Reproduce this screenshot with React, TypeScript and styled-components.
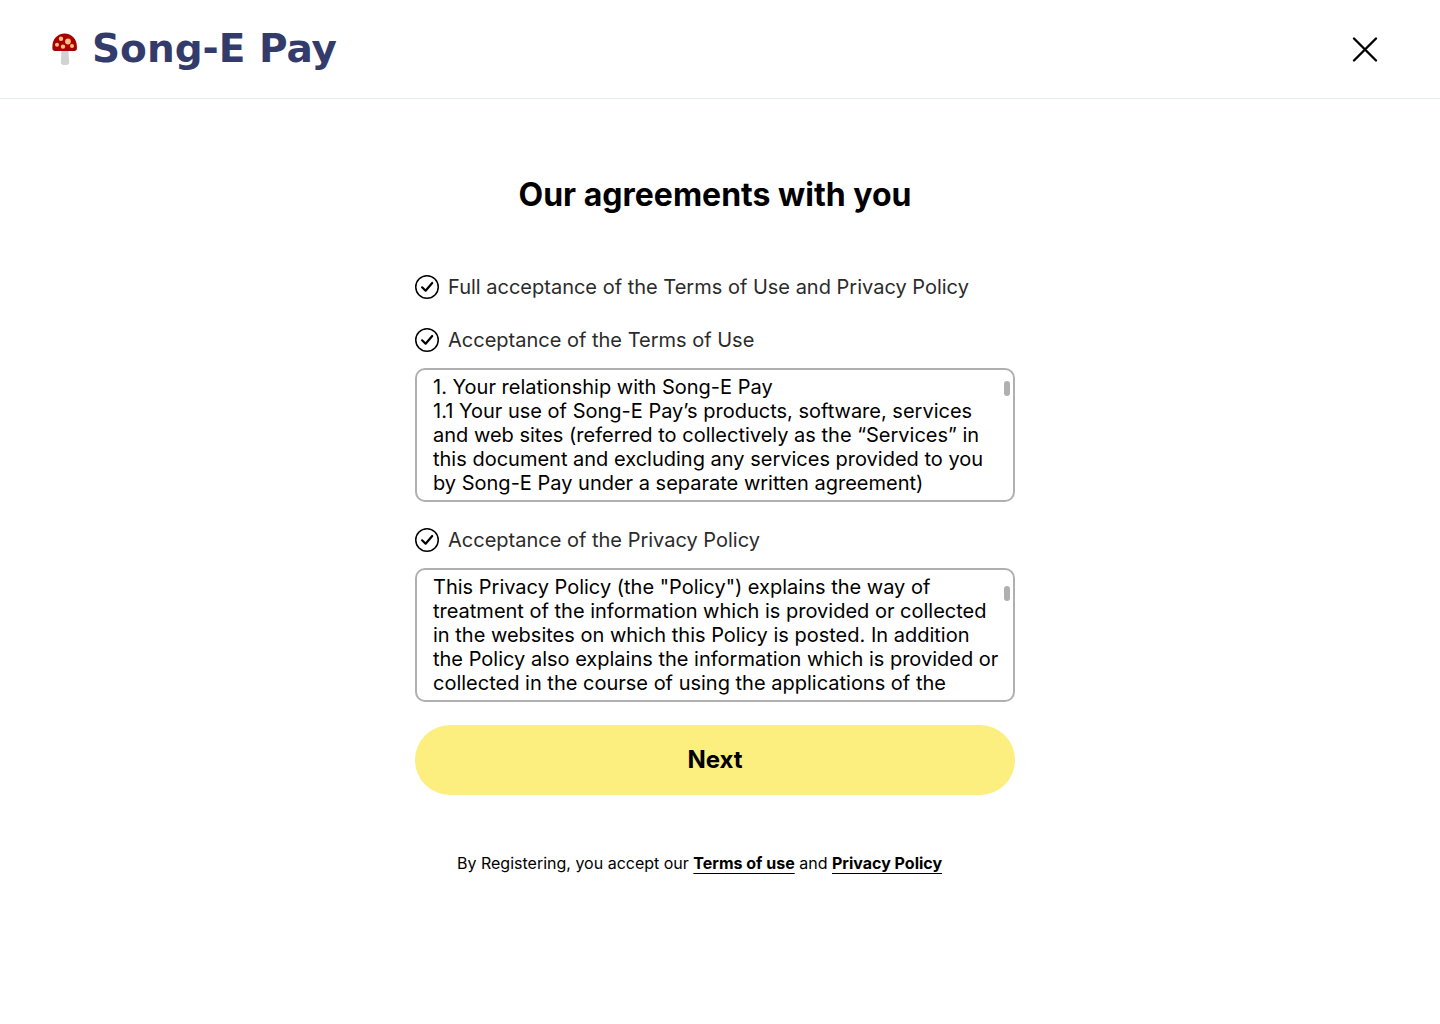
import React, { useId, useState } from "react";
import styled, { createGlobalStyle } from "styled-components";

const GlobalStyle = createGlobalStyle`
  *, *::before, *::after { box-sizing: border-box; }
  body {
    margin: 0;
    background: #ffffff;
    color: #000000;
    font-family: Inter, "Liberation Sans", sans-serif;
  }
`;

const Header = styled.header`
  display: flex;
  align-items: center;
  justify-content: space-between;
  height: 99px;
  padding: 0 60px 0 52px;
  border-bottom: 1px solid #e2ebf2;
`;

const Brand = styled.a`
  display: flex;
  align-items: center;
  gap: 14px;
  color: #333b6b;
  text-decoration: none;
`;

const BrandName = styled.span`
  font-family: "DejaVu Sans", sans-serif;
  font-size: 39px;
  font-weight: 700;
  line-height: 48px;
`;

const CloseButton = styled.button`
  display: flex;
  padding: 0;
  border: 0;
  background: none;
  color: inherit;
  cursor: pointer;
`;

const Main = styled.main`
  padding: 72px 10px 40px 0;
`;

const Column = styled.form`
  display: flex;
  flex-direction: column;
  width: 100%;
  max-width: 600px;
  margin: 0 auto;
`;

const Title = styled.h1`
  margin: 0 0 56px;
  font-size: 32px;
  font-weight: 700;
  line-height: 48px;
  text-align: center;
`;

const Agreements = styled.div`
  display: flex;
  flex-direction: column;
  gap: 29px;
`;

const Details = styled.div`
  display: flex;
  flex-direction: column;
  gap: 26px;
`;

const Agreement = styled.section`
  display: flex;
  flex-direction: column;
  gap: 16px;
`;

const CheckLabel = styled.label`
  display: flex;
  align-items: center;
  gap: 9px;
  min-height: 24px;
  color: #2b2b2b;
  font-size: 20px;
  line-height: 24px;
  cursor: pointer;
`;

const CheckMark = styled.span`
  display: grid;
  flex: none;
  width: 24px;
  height: 24px;
  color: #000000;

  > * {
    grid-area: 1 / 1;
    width: 24px;
    height: 24px;
    margin: 0;
  }

  svg { pointer-events: none; }
`;

const CheckInput = styled.input`
  appearance: none;
  border-radius: 50%;
  cursor: pointer;

  &:not(:checked) + svg .tick { display: none; }
`;

const Frame = styled.div`
  position: relative;
  height: 134px;
  border: 2px solid #b0b0b0;
  border-radius: 10px;
`;

const Scroller = styled.div`
  height: 130px;
  padding: 5px 12px 5px 16px;
  overflow-y: auto;
  scrollbar-width: none;
  font-size: 20px;
  line-height: 24px;

  p { margin: 0; }
`;

const Thumb = styled.span<{ $top: number }>`
  position: absolute;
  top: ${(p) => p.$top}px;
  right: 3px;
  width: 6px;
  height: 15px;
  border-radius: 3px;
  background: #b0b0b0;
`;

const NextButton = styled.button`
  height: 70px;
  margin-top: 23px;
  border: 0;
  border-radius: 35px;
  background: #fcee7f;
  color: #000000;
  font-family: inherit;
  font-size: 24px;
  font-weight: 700;
  line-height: 32px;
  cursor: pointer;
`;

const Notice = styled.p`
  margin: 56px 0 0;
  padding: 0 42px;
  font-size: 16px;
  line-height: 24px;
`;

const NoticeLink = styled.a`
  color: inherit;
  font-weight: 700;
  text-decoration: underline;
  text-decoration-thickness: 1px;
  text-underline-offset: 4px;
  text-decoration-skip-ink: none;
`;

function MushroomIcon() {
  return (
    <svg width="26" height="34" viewBox="0 0 26 34" aria-hidden="true">
      <path d="M9.6 17h6.600l1 13.100c.2 1.600-.8 2.800-2.300 2.800h-3.700c-1.600 0-2.600-1.200-2.400-2.800z" fill="#d2d2d4" />
      <path d="M.4 14.500C.4 7 5.600 1.500 12.600 1.500S24.900 7 24.900 14.500v1.700c0 1.700-.9 2.700-2.600 2.700H3c-1.700 0-2.600-1-2.600-2.700z" fill="#a60000" />
      <g fill="#fdbd7b">
        <circle cx="9" cy="6.700" r="2.200" />
        <circle cx="16" cy="9.500" r="2.900" />
        <circle cx="5" cy="12.700" r="2" />
        <circle cx="11" cy="14.600" r="2.200" />
        <circle cx="20" cy="14" r="2" />
      </g>
    </svg>
  );
}

function CloseIcon() {
  return (
    <svg width="30" height="30" viewBox="0 0 30 30" fill="none" stroke="currentColor" strokeWidth="2.4" strokeLinecap="round" aria-hidden="true">
      <path d="M4 4.500 26 26.500M26 4.500 4 26.500" />
    </svg>
  );
}

function Check({ text }: { text: string }) {
  const id = useId();
  const [checked, setChecked] = useState(true);
  return (
    <CheckLabel htmlFor={id}>
      <CheckMark>
        <CheckInput id={id} type="checkbox" checked={checked} onChange={(e) => setChecked(e.target.checked)} />
        <svg viewBox="0 0 24 24" fill="none" stroke="currentColor" aria-hidden="true">
          <circle cx="12" cy="12" r="11.250" strokeWidth="1.500" />
          <path className="tick" d="M7.100 12.300 10.600 15.700 17.200 8" strokeWidth="2.200" strokeLinecap="round" strokeLinejoin="round" />
        </svg>
      </CheckMark>
      {text}
    </CheckLabel>
  );
}

function Document({ name, thumbTop, children }: { name: string; thumbTop: number; children: React.ReactNode }) {
  return (
    <Frame>
      <Scroller tabIndex={0} role="region" aria-label={name}>
        {children}
      </Scroller>
      <Thumb $top={thumbTop} />
    </Frame>
  );
}

export default function App() {
  return (
    <>
      <GlobalStyle />
      <Header>
        <Brand href="#home">
          <MushroomIcon />
          <BrandName>Song-E Pay</BrandName>
        </Brand>
        <CloseButton type="button" aria-label="Close">
          <CloseIcon />
        </CloseButton>
      </Header>
      <Main>
        <Column onSubmit={(e) => e.preventDefault()}>
          <Title>Our agreements with you</Title>
          <Agreements>
            <Check text="Full acceptance of the Terms of Use and Privacy Policy" />
            <Details>
              <Agreement>
                <Check text="Acceptance of the Terms of Use" />
                <Document name="Terms of Use" thumbTop={11}>
                  <p>1. Your relationship with Song-E Pay</p>
                  <p>
                    1.1 Your use of Song-E Pay’s products, software, services and web sites (referred to collectively
                    as the “Services” in this document and excluding any services provided to you by Song-E Pay under a
                    separate written agreement)
                  </p>
                </Document>
              </Agreement>
              <Agreement>
                <Check text="Acceptance of the Privacy Policy" />
                <Document name="Privacy Policy" thumbTop={16}>
                  <p>
                    This Privacy Policy (the "Policy") explains the way of treatment of the information which is
                    provided or collected in the websites on which this Policy is posted. In addition the Policy also
                    explains the information which is provided or collected in the course of using the applications of
                    the
                  </p>
                </Document>
              </Agreement>
            </Details>
          </Agreements>
          <NextButton type="submit">Next</NextButton>
          <Notice>
            By Registering, you accept our <NoticeLink href="#terms">Terms of use</NoticeLink> and{" "}
            <NoticeLink href="#privacy">Privacy Policy</NoticeLink>
          </Notice>
        </Column>
      </Main>
    </>
  );
}
